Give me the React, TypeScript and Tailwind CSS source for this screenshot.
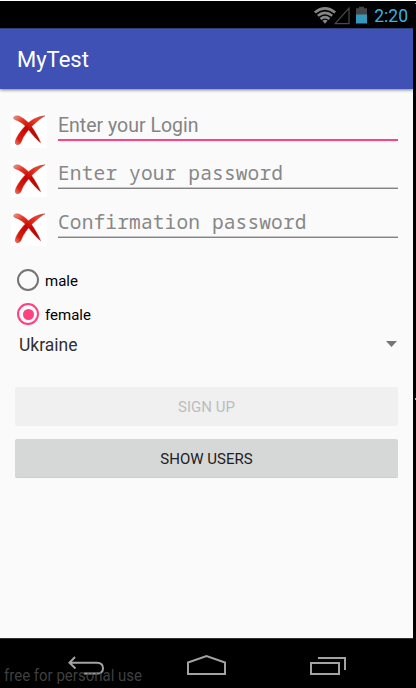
import React from 'react';

function CrossIcon({ id }: { id: string }) {
  return (
    <svg className="h-9 w-9 shrink-0 bg-white" viewBox="0 0 36 36">
      <defs>
        <linearGradient id={id + 'a'} x1="0" y1="0" x2="1" y2="1">
          <stop offset="0" stopColor="#f0a090" />
          <stop offset="0.25" stopColor="#e8301c" />
          <stop offset="0.55" stopColor="#c80800" />
          <stop offset="1" stopColor="#a81008" />
        </linearGradient>
        <linearGradient id={id + 'b'} x1="1" y1="0" x2="0" y2="1">
          <stop offset="0" stopColor="#b84840" />
          <stop offset="0.2" stopColor="#f04028" />
          <stop offset="0.55" stopColor="#c80400" />
          <stop offset="0.85" stopColor="#dc2010" />
          <stop offset="1" stopColor="#ec8070" />
        </linearGradient>
      </defs>
      <path d="M3.2 4.8C5 3.4 7.6 3.7 9.3 4.7C14.5 7.3 19 11.6 22.3 17C25.3 21.7 28.8 27.6 29.6 30.8C26.5 28.4 23 24.8 19.7 20.5C15 14.4 11.5 10.2 4.3 7.7C2.5 7.1 2.3 5.7 3.2 4.8Z" fill={`url(#${id}a)`} stroke="#a83028" strokeWidth=".4" />
      <path d="M34 3.8C30.3 6 26.2 9.1 21.7 13.5C16.8 18.4 12.3 24 10.5 29.3C9.5 32.2 7.7 33.3 5.6 32.5C3.7 31.7 4.1 29.2 5.2 26.7C7.5 21.5 13.4 14.2 18.4 10C23.6 5.8 29.5 4.2 34 3.8Z" fill={`url(#${id}b)`} stroke="#a83028" strokeWidth=".4" />
    </svg>
  );
}

function Field({ id, text, width, active, mono }: { id: string; text: string; width: number; active?: boolean; mono?: boolean }) {
  return (
    <div className="flex h-[49px] items-start pl-[11px] pr-[15px]">
      <CrossIcon id={id} />
      <div className={`ml-[11px] flex h-[29px] flex-1 flex-col justify-between ${mono ? '-mt-px' : ''}`}>
        <svg className={`h-7 w-full shrink-0 overflow-visible ${mono ? 'mt-px' : ''}`}>
          <text
            x={0}
            y={mono ? 19 : 19.5}
            textLength={width}
            lengthAdjust={mono ? 'spacing' : 'spacingAndGlyphs'}
            className={mono ? "fill-[#888888] font-['Noto_Sans_Mono','DejaVu_Sans_Mono',monospace] text-[19.5px]" : "fill-[#848484] font-[Roboto,sans-serif] text-[19.5px]"}
          >
            {text}
          </text>
        </svg>
        <div className={active ? '-mt-px h-0.5 shrink-0 bg-[#ff4081]' : '-mt-[2px] h-0.5 shrink-0 border-b border-[#838383] bg-[#c7c7c7]'} />
      </div>
    </div>
  );
}

function Radio({ text, checked }: { text: string; checked?: boolean }) {
  return (
    <div className="flex h-[34px] items-center pl-[17px]">
      <div className={`flex h-[22px] w-[22px] items-center justify-center rounded-full border-2 ${checked ? 'border-[#ff4081]' : 'border-[#757575]'}`}>
        {checked && <div className="h-[11px] w-[11px] rounded-full bg-[#ff4081]" />}
      </div>
      <span className="relative top-px ml-1.5 text-[15px] leading-5 text-black">{text}</span>
    </div>
  );
}

export default function App() {
  return (
    <div className="relative flex h-[688px] w-[416px] flex-col overflow-hidden border-t border-white bg-black font-[Roboto,sans-serif]">
      <header className="flex h-[27px] shrink-0 items-center justify-end pr-[9px]">
        <svg width="56" height="20" viewBox="0 0 56 20" className="relative left-[2px] top-px mr-[6px]">
          <g fill="none" stroke="#858585" strokeWidth="2.6">
            <path d="M.8 6.4Q11 -1.6 21.2 6.4" />
            <path d="M3.8 9.8Q11 4 18.2 9.8" />
            <path d="M6.5 13Q11 9.3 15.5 13" />
          </g>
          <path d="M8.4 14.7Q11 12.7 13.6 14.7L11 17.8Z" fill="#858585" />
          <path d="M35 2.2V17.7H21.2Z" fill="none" stroke="#4a4a4a" strokeWidth="1.2" />
          <path d="M45 .7h5v1.6h3V9H42V2.3h3Z" fill="#454545" />
          <path d="M42 8.5h11v9H42Z" fill="#3599bd" />
        </svg>
        <span className="relative top-px -mr-px text-[17.5px] leading-5 text-[#33b5e5]">2:20</span>
      </header>
      <main className="flex h-[610px] w-[413px] shrink-0 flex-col bg-[#fafafa]">
        <div className="flex h-[61px] shrink-0 items-center border-t border-[#303f80] bg-[#3f51b5] pl-[17px] shadow-[0_1px_3px_rgba(0,0,0,0.5)]">
          <h1 className="relative top-[1px] text-[22px] leading-7 text-white">MyTest</h1>
        </div>
        <div className="pt-[23px]">
          <Field id="login" text="Enter your Login" width={140.5} active />
          <Field id="pass" text="Enter your password" width={225} mono />
          <Field id="confirm" text="Confirmation password" width={248.5} mono />
        </div>
        <div className="pt-1">
          <Radio text="male" />
          <Radio text="female" checked />
        </div>
        <div className="flex h-7 items-center justify-between pl-[19px] pr-4">
          <span className="text-[17.5px] leading-6 text-[#303030]">Ukraine</span>
          <svg width="11" height="6" viewBox="0 0 11 6" className="relative -top-px"><path d="M0 0h11L5.5 6Z" fill="#757575" /></svg>
        </div>
        <div className="flex flex-col gap-[13px] pl-[15px] pr-[15px] pt-7">
          <button disabled className="h-[39px] rounded-[2px] bg-[#f0f0f0] text-[15px] leading-5 text-[#bcbcbc]">SIGN UP</button>
          <button className="h-[39px] rounded-[2px] border-b border-[#cccecd] bg-[#d6d8d7] pt-px text-[15px] leading-5 text-[#202020]">SHOW USERS</button>
        </div>
      </main>
      <footer className="h-[50px] w-[413px] shrink-0 border-t border-[#303030]">
        <svg width="413" height="49" viewBox="0 639 413 49" fill="none" stroke="#a3a3a3" strokeWidth="2">
          <path d="M75 657L69.5 662.8L75.5 668.5M70 662.8H97Q103 662.8 103 668.3T97 673.5H84" />
          <path d="M188 674V662.5L206.5 656L225 662.5V674Z" />
          <path d="M311 663H339V674H311ZM318 658H345V670" />
        </svg>
      </footer>
      <span className="absolute bottom-0 left-[4px] origin-left scale-x-[0.91] whitespace-nowrap text-[16.5px] leading-6 text-[#505050]/80">free for personal use</span>
      <div className="absolute right-0 top-[397px] h-[2px] w-px bg-[#b0b0b0]" />
      <div className="absolute right-0 top-[2px] h-px w-px bg-[#999]" />
    </div>
  );
}
